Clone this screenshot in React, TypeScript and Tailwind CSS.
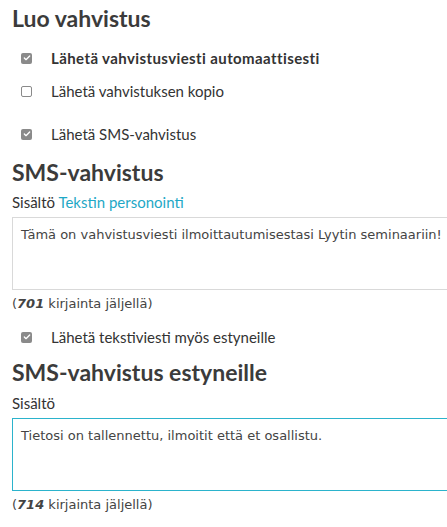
import { Check } from "lucide-react";

function Box({ checked }: { checked: boolean }) {
	return checked ? (
		<span className="flex h-[11px] w-[11px] items-center justify-center rounded-[2px] bg-[#8a8a8a]">
			<Check className="h-[8px] w-[8px] text-white" strokeWidth={4} />
		</span>
	) : (
		<span className="h-[11px] w-[11px] rounded-[2px] border border-[#8a8a8a] bg-white" />
	);
}

function CheckRow({ checked, bold, label }: { checked: boolean; bold?: boolean; label: string }) {
	return (
		<div className="flex h-[22px] items-center pl-[9px]">
			<Box checked={checked} />
			<span className={`ml-[19px] text-[15px] text-[#333] ${bold ? "font-bold tracking-[0.4px]" : ""}`}>{label}</span>
		</div>
	);
}

function Counter({ n }: { n: number }) {
	return (
		<div className="font-['DejaVu_Sans',sans-serif] text-[13px] leading-[16px] text-[#444]">
			(<b className="italic">{n}</b> kirjainta jäljellä)
		</div>
	);
}

export default function App() {
	return (
		<div className="w-[447px] overflow-hidden bg-white pl-3 font-['Lato',sans-serif] text-[#333]">
			<h2 className="pt-[4px] text-[23px] leading-[28px] font-bold text-[#3b3b3b]">Luo vahvistus</h2>
			<div className="mt-[15px]">
				<CheckRow checked bold label="Lähetä vahvistusviesti automaattisesti" />
			</div>
			<div className="mt-[11px]">
				<CheckRow checked={false} label="Lähetä vahvistuksen kopio" />
			</div>
			<div className="mt-[21px]">
				<CheckRow checked label="Lähetä SMS-vahvistus" />
			</div>
			<h2 className="mt-[13px] text-[23px] leading-[28px] font-bold text-[#3b3b3b]">SMS-vahvistus</h2>
			<div className="mt-[6px] text-[15px] leading-[20px]">
				Sisältö <span className="text-[#1ea8c6]">Tekstin personointi</span>
			</div>
			<div className="mt-[5px] -mr-10 h-[73px] border border-[#d9d9d9] px-2 pt-[7px] font-['DejaVu_Sans',sans-serif] text-[13px] text-[#444]">
				Tämä on vahvistusviesti ilmoittautumisestasi Lyytin seminaariin!
			</div>
			<div className="mt-[6px]">
				<Counter n={701} />
			</div>
			<div className="mt-[14px]">
				<CheckRow checked label="Lähetä tekstiviesti myös estyneille" />
			</div>
			<h2 className="mt-[10px] text-[23px] leading-[28px] font-bold text-[#3b3b3b]">SMS-vahvistus estyneille</h2>
			<div className="mt-[7px] text-[15px] leading-[20px]">Sisältö</div>
			<div className="mt-[5px] -mr-10 h-[73px] border border-[#2bb3cc] px-2 pt-[7px] font-['DejaVu_Sans',sans-serif] text-[13px] text-[#444]">
				Tietosi on tallennettu, ilmoitit että et osallistu.
			</div>
			<div className="mt-[6px]">
				<Counter n={714} />
			</div>
		</div>
	);
}
